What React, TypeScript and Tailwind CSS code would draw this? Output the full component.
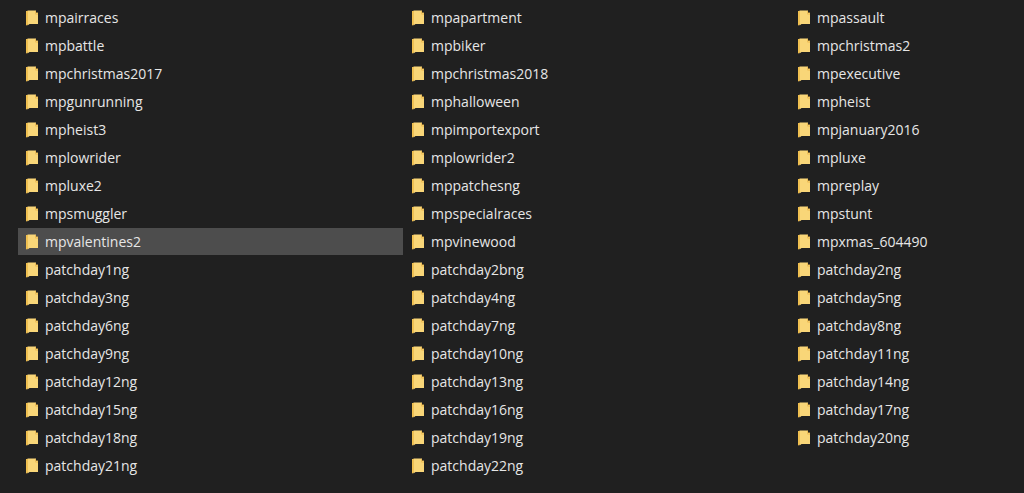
import React from "react";

const columns = [
  ["mpairraces", "mpbattle", "mpchristmas2017", "mpgunrunning", "mpheist3", "mplowrider", "mpluxe2", "mpsmuggler", "mpvalentines2", "patchday1ng", "patchday3ng", "patchday6ng", "patchday9ng", "patchday12ng", "patchday15ng", "patchday18ng", "patchday21ng"],
  ["mpapartment", "mpbiker", "mpchristmas2018", "mphalloween", "mpimportexport", "mplowrider2", "mppatchesng", "mpspecialraces", "mpvinewood", "patchday2bng", "patchday4ng", "patchday7ng", "patchday10ng", "patchday13ng", "patchday16ng", "patchday19ng", "patchday22ng"],
  ["mpassault", "mpchristmas2", "mpexecutive", "mpheist", "mpjanuary2016", "mpluxe", "mpreplay", "mpstunt", "mpxmas_604490", "patchday2ng", "patchday5ng", "patchday8ng", "patchday11ng", "patchday14ng", "patchday17ng", "patchday20ng"],
];

function FolderIcon() {
  return (
    <svg width="12" height="16" viewBox="0 0 12 16" className="shrink-0">
      {/* back of the folder */}
      <path d="M0 1h10v1.5h2V14H2.5L0 15.5z" fill="#dca93f" />
      {/* front */}
      <path d="M1.5 0.5H10V3l2 .5V14H3.5l-2 1.5z" fill="#f9d678" />
      <path d="M9 1h1v2.5l2 .5v1l-3-.7z" fill="#efbf58" />
      <path d="M0 1h1.5v13.5L0 15.5z" fill="#f2c14f" />
    </svg>
  );
}

function FolderRow({ name, selected }: { name: string; selected?: boolean }) {
  return (
    <div className={`mb-px flex h-[27px] items-center pl-2 ${selected ? "bg-[#4d4d4d]" : ""}`}>
      <FolderIcon />
      <span className="ml-[7px] text-[14px] text-[#e6e6e6]">{name}</span>
    </div>
  );
}

export default function App() {
  return (
    <div className="h-[493px] w-[1024px] overflow-hidden bg-[#202020] pl-[18px] pt-1 font-['Open_Sans',sans-serif]">
      <div className="grid grid-cols-[386px_386px_220px]">
        {columns.map((col) => (
          <div key={col[0]} className="flex w-[385px] flex-col">
            {col.map((name) => (
              <FolderRow key={name} name={name} selected={name === "mpvalentines2"} />
            ))}
          </div>
        ))}
      </div>
    </div>
  );
}
